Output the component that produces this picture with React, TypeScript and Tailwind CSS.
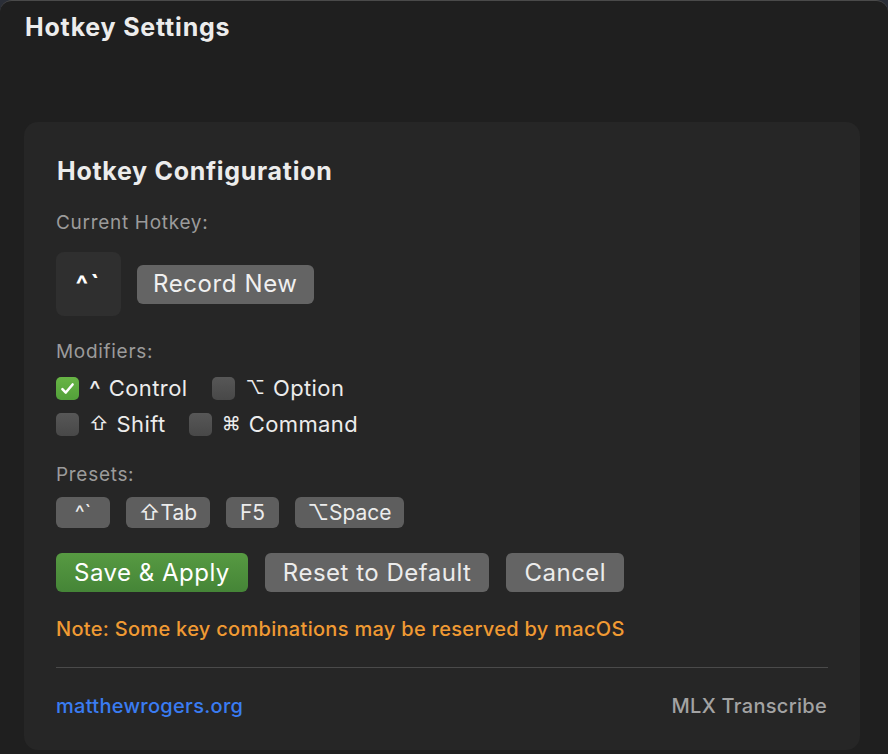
import React from 'react';

const font = { fontFamily: 'Inter, "DejaVu Sans", sans-serif' };

const Checkbox: React.FC<{ checked?: boolean }> = ({ checked }) =>
  checked ? (
    <div className="w-[23px] h-[23px] rounded-[5px] bg-gradient-to-b from-[#68b545] to-[#52a03a] flex items-center justify-center">
      <svg width="17" height="17" viewBox="0 0 16 16" fill="none">
        <path d="M3.2 8.6 6.4 11.8 12.8 4.2" stroke="white" strokeWidth="2.4" strokeLinecap="round" strokeLinejoin="round" />
      </svg>
    </div>
  ) : (
    <div className="w-[23px] h-[23px] rounded-[5px] bg-gradient-to-b from-[#575757] to-[#484848]" />
  );

const Modifier: React.FC<{ symbol: string; label: string; checked?: boolean; big?: boolean }> = ({ symbol, label, checked, big }) => (
  <div className="flex items-center gap-[10px]">
    <Checkbox checked={checked} />
    <span className="flex items-center gap-[8px] text-[#ececec]">
      <span className={big ? 'h-[26px] text-[25px] leading-[31px]' : 'text-[19px] leading-[26px]'}>{symbol}</span>
      <span className="text-[22px] leading-[26px] tracking-[0.4px]">{label}</span>
    </span>
  </div>
);

const App: React.FC = () => {
  const presets = [
    { label: '^`', w: 'min-w-[54px]' },
    { label: '⇧Tab', w: 'min-w-[84px]' },
    { label: 'F5', w: 'min-w-[53px]' },
    { label: '⌥Space', w: 'min-w-[109px]' },
  ];

  return (
    <div className="w-[888px] h-[754px] bg-[#2a2e37] overflow-hidden" style={font}>
      <div className="h-full bg-[#1f1f1f] rounded-t-[12px] border-t border-[#4a4a4a] pl-6 pr-7 pt-[11px]">
        {/* Window title */}
        <h1 className="text-[25px] leading-[30px] font-bold tracking-[0.8px] text-[#ececec] pl-px">Hotkey Settings</h1>

        {/* Card */}
        <div className="mt-[80px] h-[628px] bg-[#262626] rounded-[14px] px-8 pt-[34px]">
          <h2 className="text-[25px] leading-[30px] font-bold tracking-[0.7px] text-[#ececec] pl-px">Hotkey Configuration</h2>

          <div className="mt-[25px] text-[19px] leading-[24px] tracking-[0.7px] text-[#9b9b9b]">Current Hotkey:</div>
          <div className="mt-[17px] flex items-center gap-4">
            <div className="w-[65px] h-[64px] rounded-[8px] bg-[#2f2f2f] flex items-center justify-center text-[26px] font-bold tracking-[2px] text-white">
              ^`
            </div>
            <button className="h-[39px] px-4 rounded-[6px] bg-[#646464] text-[24px] tracking-[0.6px] text-[#f0f0f0]">Record New</button>
          </div>

          <div className="mt-[24px] text-[19px] leading-[24px] tracking-[0.7px] text-[#9b9b9b]">Modifiers:</div>
          <div className="mt-[11px] flex flex-col gap-[10px]">
            <div className="flex items-center gap-[25px]">
              <Modifier symbol="^" label="Control" checked big />
              <Modifier symbol="⌥" label="Option" />
            </div>
            <div className="flex items-center gap-[23px]">
              <Modifier symbol="⇧" label="Shift" />
              <Modifier symbol="⌘" label="Command" />
            </div>
          </div>

          <div className="mt-[26px] text-[19px] leading-[24px] tracking-[0.7px] text-[#9b9b9b]">Presets:</div>
          <div className="mt-[10px] flex gap-4">
            {presets.map((p) => (
              <button
                key={p.label}
                className={`${p.w} h-[31px] px-[12px] rounded-[6px] bg-[#5e5e5e] text-[21px] leading-none text-[#ececec]`}
              >
                {p.label}
              </button>
            ))}
          </div>

          <div className="mt-[25px] flex gap-[17px]">
            <button className="h-[39px] px-[18px] rounded-[6px] bg-gradient-to-b from-[#579a42] to-[#458537] text-[24px] tracking-[0.5px] text-white">Save &amp; Apply</button>
            <button className="h-[39px] px-[18px] rounded-[6px] bg-[#646464] text-[24px] tracking-[0.5px] text-[#ececec]">Reset to Default</button>
            <button className="h-[39px] px-[18px] rounded-[6px] bg-[#646464] text-[24px] tracking-[0.5px] text-[#ececec]">Cancel</button>
          </div>

          <p className="mt-[24px] text-[20px] leading-[26px] font-medium tracking-[0.3px] text-[#f09a33]">
            Note: Some key combinations may be reserved by macOS
          </p>

          <div className="mt-[25px] h-px bg-[#4a4a4a]" />

          <div className="mt-[26px] flex items-center justify-between text-[20px] leading-[24px] font-medium tracking-[0.3px]">
            <a className="text-[#3a7cf2]">matthewrogers.org</a>
            <span className="text-[#a3a3a3] pr-px">MLX Transcribe</span>
          </div>
        </div>
      </div>
    </div>
  );
};

export default App;
